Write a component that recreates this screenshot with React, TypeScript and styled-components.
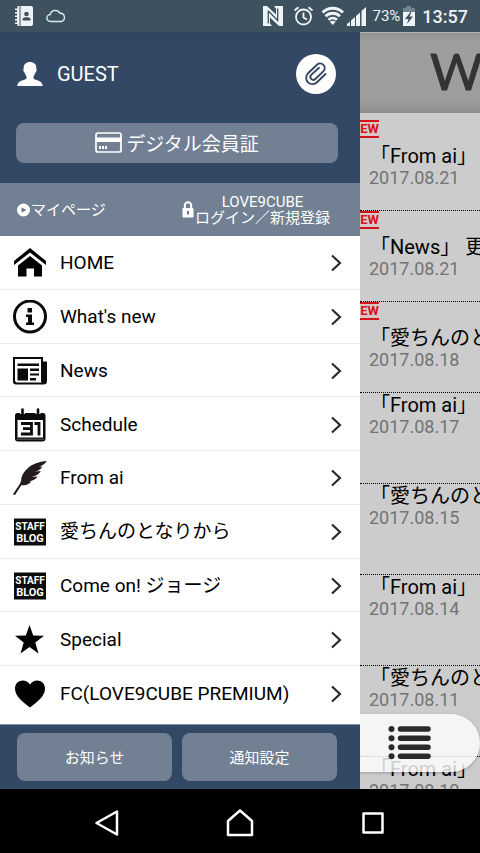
import React from "react";
import styled, { createGlobalStyle } from "styled-components";

const GlobalStyle = createGlobalStyle`
  * { box-sizing: border-box; }
  html, body { margin: 0; background: #000; }
  body, button { font-family: Roboto, "Noto Sans CJK JP", sans-serif; }
  button { border: 0; margin: 0; padding: 0; color: inherit; cursor: pointer; }
  a { color: inherit; text-decoration: none; }
  svg { display: block; flex: none; }
`;

const Screen = styled.div`
  display: flex;
  flex-direction: column;
  height: 100vh;
  overflow: hidden;
`;

const StatusBar = styled.header`
  flex: none;
  display: flex;
  align-items: center;
  justify-content: space-between;
  height: 32px;
  padding: 0 12px 0 15px;
  background: #3e515f;
  color: #eef3f7;
`;

const StatusGroup = styled.div<{ $gap: number }>`
  display: flex;
  align-items: center;
  gap: ${(p) => p.$gap}px;
`;

const BatteryText = styled.span`
  font-size: 15px;
`;

const Clock = styled.time`
  font-size: 18px;
  font-weight: 500;
`;

const Body = styled.div`
  flex: 1;
  min-height: 0;
  display: grid;
  grid-template-columns: 3fr 1fr;
  grid-template-rows: minmax(0, 1fr);
`;

const Drawer = styled.aside`
  display: flex;
  flex-direction: column;
  min-width: 0;
  background: #334865;
`;

const DrawerHead = styled.div`
  flex: none;
  display: flex;
  flex-direction: column;
  gap: 29px;
  padding: 22px 22px 20px 16px;
  background: linear-gradient(#2f4260, #334865 16px);
`;

const UserRow = styled.div`
  display: flex;
  align-items: center;
  height: 40px;
  padding: 0 2px 0 0;
  color: #fff;
`;

const UserName = styled.span`
  flex: 1;
  padding-left: 13px;
  font-size: 20px;
  line-height: 24px;
`;

const RoundButton = styled.button`
  display: grid;
  place-items: center;
  width: 40px;
  height: 40px;
  border-radius: 50%;
  background: #fff;
`;

const SlateButton = styled.button<{ $height: number; $size: number }>`
  flex: 1 1 auto;
  display: flex;
  align-items: center;
  justify-content: center;
  gap: 4px;
  height: ${(p) => p.$height}px;
  padding-bottom: 2px;
  border-radius: 8px;
  background: #718093;
  color: #fff;
  font-size: ${(p) => p.$size}px;
`;

const AccountBar = styled.div`
  flex: none;
  display: grid;
  grid-template-columns: 1fr 1fr;
  height: 53px;
  background: #718092;
  color: #fff;
  font-size: 15px;
  line-height: 16px;
`;

const AccountLink = styled.a<{ $start: number }>`
  display: flex;
  align-items: center;
  padding-left: ${(p) => p.$start}px;
  gap: 1px;
  white-space: nowrap;
  text-align: center;
`;

const Menu = styled.nav`
  flex: 1;
  min-height: 0;
  display: grid;
  grid-auto-rows: 1fr;
  padding-bottom: 4px;
  background: #fff;
`;

const MenuItem = styled.a`
  display: flex;
  align-items: center;
  padding: 2px 17px 0 13px;
  border-bottom: 1px solid #ececec;
  color: #000;
  font-size: 19px;
  line-height: 24px;
  white-space: nowrap;
  &:last-child { border-bottom-color: transparent; }
`;

const MenuLabel = styled.span`
  flex: 1;
  padding-left: 13px;
`;

const DrawerFoot = styled.div`
  flex: none;
  display: grid;
  grid-template-columns: 1fr 1fr;
  gap: 10px;
  padding: 8px 23px 8px 17px;
  border-top: 1px solid #8190a3;
`;

const Content = styled.main`
  position: relative;
  min-width: 0;
  overflow: hidden;
  background: #ccc;
`;

const Banner = styled.div`
  height: 81px;
  padding-left: 70px;
  overflow: hidden;
  border-top: 1px solid #b4b4b4;
  background: linear-gradient(#8f8f8f, #9e9e9e 8px, #9d9d9d 68px, #8c8c8c);
  color: #333;
  font-family: Lato, sans-serif;
  font-size: 51px;
  line-height: 76px;
  white-space: nowrap;
  -webkit-text-stroke: 1px #333;
`;

const Feed = styled.div`
  padding-top: 7px;
`;

const FeedItem = styled.a`
  display: block;
  height: 91px;
  overflow: hidden;
  border-bottom: 1px dotted #000;
  white-space: nowrap;
`;

const NewBadge = styled.span`
  display: flex;
  justify-content: flex-end;
  align-items: center;
  width: 19px;
  height: 18px;
  margin-bottom: 6px;
  overflow: hidden;
  border: solid #d3141d;
  border-width: 2px 0;
  background: #d8c6c6;
  color: #d3141d;
  font-size: 13px;
  font-weight: 700;
  line-height: 14px;
`;

const FeedTitle = styled.div`
  padding-left: 10px;
  color: #000;
  font-size: 20px;
  line-height: 24px;
`;

const FeedDate = styled.time`
  display: block;
  padding-left: 9px;
  color: #737373;
  font-size: 18px;
  line-height: 20px;
`;

const ListButton = styled.button`
  position: absolute;
  left: 0;
  right: 0;
  bottom: 17px;
  display: flex;
  align-items: center;
  height: 58px;
  padding-left: 28px;
  border-radius: 0 29px 29px 0;
  background: rgba(255, 255, 255, 0.8);
  box-shadow: 0 1px 3px rgba(0, 0, 0, 0.25);
`;

const NavBar = styled.footer`
  flex: none;
  display: flex;
  justify-content: center;
  align-items: center;
  gap: 93px;
  height: 64px;
  padding-top: 4px;
  background: #000;
`;

const NavButton = styled.button`
  display: grid;
  place-items: center;
  width: 40px;
  height: 48px;
  background: transparent;
`;

const BookIcon = () => (
  <svg width="18" height="20" viewBox="0 0 18 20">
    <path d="M2.500 0H4.500V20H2.500V18H0V16.500H2V14.500H0V13H2V11H0V9.500H2V7.500H0V6H2V4H0V2.500H2.500Z" fill="#eef3f7" />
    <path d="M5.500 0H16a2 2 0 0 1 2 2V18a2 2 0 0 1-2 2H5.500Z" fill="#eef3f7" />
    <circle cx="11.500" cy="8" r="2.300" fill="#3e515f" />
    <path d="M7.500 14.500v-1.500c0-2.500 8-2.500 8 0v1.500Z" fill="#3e515f" />
  </svg>
);

const CloudIcon = () => (
  <svg width="20" height="14" viewBox="0 0 20 14" fill="none" stroke="#dfe7ed" strokeWidth="1.400">
    <path d="M4.500 12.500a3.500 3.500 0 0 1-.3-7A5.300 5.300 0 0 1 14 4.300a4.200 4.200 0 0 1 1.500 8.200Z" />
  </svg>
);

const NfcIcon = () => (
  <svg width="24" height="20" viewBox="0 0 24 20" fill="#eef3f7">
    <path d="M0 0H4L13 8.500V2.500L11 0H20V20H16L7 11.500V17.500L9 20H0Z" />
    <path d="M5.300 4.500V17.500M14.700 2.500V15.500M5.300 5L14.700 14.500" fill="none" stroke="#3e515f" strokeWidth="1.300" />
  </svg>
);

const AlarmIcon = () => (
  <svg width="28" height="20" viewBox="0 0 28 20" fill="none" stroke="#eef3f7" strokeWidth="1.800">
    <circle cx="14.500" cy="11" r="7.500" />
    <path d="M14.500 6.500V11.500L18 13.500M5.500 4.500L9.500 1.200M23.500 4.500L19.500 1.200" />
  </svg>
);

const WifiIcon = () => (
  <svg width="26" height="20" viewBox="0 0 26 20" fill="none" stroke="#eef3f7" strokeWidth="2.800">
    <path d="M3.500 6.500C9 .8 18.500 .8 24 6.500" />
    <path d="M6.500 10.300C10.500 6.200 17 6.200 21 10.300" />
    <path d="M9.500 13.800C12 11.500 15.500 11.500 18 13.800" />
    <path d="M10.800 15.800Q13.750 13.800 16.700 15.800L13.750 19Z" fill="#eef3f7" stroke="none" />
  </svg>
);

const SignalIcon = () => (
  <svg width="23" height="20" viewBox="0 0 23 20" fill="#eef3f7">
    <path d="M0 20V18L3 15.500V20ZM4 20V14.500L8 11V20ZM9 20V10L13 6.500V20ZM14.500 20V5L19 1V20Z" />
  </svg>
);

const BatteryIcon = () => (
  <svg width="18" height="20" viewBox="0 0 18 20">
    <path d="M1 2H4V0H9V2H13V6H1Z" fill="#74828d" />
    <path d="M1 6H13V20H1Z" fill="#eef3f7" />
    <path d="M8.500 6L3 13H6.500L5 18L11 10.500H7.500L9.500 6Z" fill="#3e515f" />
  </svg>
);

const UserIcon = () => (
  <svg width="28" height="26" viewBox="0 0 28 26" fill="#fff">
    <path d="M14 1c-4 0-6.500 2.500-6.300 6 0 1-.6 1.500-.2 3 .3 1.300 1.100 1.300 1.500 2.500.5 1.400 1.500 2.500 1.500 3.500v1.500C8.500 19.500 2 19 1.200 25H26.800C26 19 19.500 19.500 17.500 17.500V16c0-1 1-2.100 1.500-3.500.4-1.200 1.200-1.200 1.500-2.500.4-1.500-.2-2-.2-3C20.500 3.500 18 1 14 1Z" />
  </svg>
);

const ClipIcon = () => (
  <svg width="24" height="26" viewBox="0 0 24 26" fill="none" stroke="#334865" strokeWidth="1.900" strokeLinecap="round">
    <path d="M21.500 13L13 21.300a6.300 6.300 0 0 1-9-9L13 3.700a4.600 4.600 0 0 1 6.500 6.500L11.300 18a2.900 2.900 0 0 1-4.100-4.100L15 6.800" />
  </svg>
);

const CardIcon = () => (
  <svg width="27" height="21" viewBox="0 0 27 21">
    <rect x="1" y="1" width="25" height="19" rx="2" fill="none" stroke="#fff" strokeWidth="1.700" />
    <path d="M1 5.500H26V10H1ZM4 14H6V17H4ZM7 14H9V17H7ZM10 14H12V17H10Z" fill="#fff" />
  </svg>
);

const PlayIcon = () => (
  <svg width="13" height="14" viewBox="0 0 13 14">
    <circle cx="6.500" cy="7" r="6.500" fill="#fff" />
    <path d="M4.500 4.500L9.500 7L4.500 9.500Z" fill="#66758a" />
  </svg>
);

const LockIcon = () => (
  <svg width="12" height="17" viewBox="0 0 12 17">
    <path d="M2.800 8V4.500a3.200 3.200 0 0 1 6.400 0V8" fill="none" stroke="#fff" strokeWidth="2" />
    <rect x="0.500" y="7" width="11" height="9.500" rx="1" fill="#fff" />
    <path d="M5 10H7V13.500H5Z" fill="#66758a" />
  </svg>
);

const ChevronIcon = () => (
  <svg width="14" height="18" viewBox="0 0 14 18" fill="none" stroke="#2b2b2b" strokeWidth="2.200">
    <path d="M3 1.500L11 9L3 16.500" />
  </svg>
);

const HomeIcon = () => (
  <svg width="34" height="34" viewBox="0 0 34 34" fill="#000">
    <path d="M17 2L33 15V19L17 6.500L1 19V15Z" />
    <path d="M17 10L29 19.500V30.500H21V22.500H13.500V30.500H5V19.500Z" />
  </svg>
);

const InfoIcon = () => (
  <svg width="34" height="34" viewBox="0 0 34 34">
    <circle cx="17" cy="16.500" r="15.500" fill="none" stroke="#0b0b0b" strokeWidth="3" />
    <path d="M14.500 8H19V12.500H14.500ZM13 14.500H19V22.500H21V25H13V22.500H15V17H13Z" fill="#0b0b0b" />
  </svg>
);

const NewsIcon = () => (
  <svg width="34" height="34" viewBox="0 0 34 34">
    <path d="M0 3H30V7.500H34V27a3.500 3.500 0 0 1-3.500 3.500H3A3 3 0 0 1 0 27.500Z" fill="#0b0b0b" />
    <path d="M2 5H28V27.500L28.500 28.500H3.500L2 27Z" fill="#fff" />
    <path d="M4.500 9.500H26V12H4.500ZM4.500 14.500H15V26.500H4.500ZM17 14.500H26V17H17ZM17 19.500H26V21.500H17ZM17 24H23V26.500H17Z" fill="#0b0b0b" />
  </svg>
);

const CalendarIcon = () => (
  <svg width="34" height="34" viewBox="0 0 34 34">
    <path d="M4 5H30a2.500 2.500 0 0 1 2.500 2.500V30.500a3 3 0 0 1-3 3H5a3 3 0 0 1-3-3V7.500A2.500 2.500 0 0 1 4 5Z" fill="#0b0b0b" />
    <path d="M4.500 12H30V29.500H4.500Z" fill="#fff" />
    <path d="M3.500 31.200H31" stroke="#888" strokeWidth="0.700" />
    <path d="M9.500 1.500V6M25 1.500V6" stroke="#fff" strokeWidth="5" />
    <path d="M9.500 1.500V7M25 1.500V7" stroke="#0b0b0b" strokeWidth="2.600" strokeLinecap="round" />
    <path d="M8 15.500H18.500V26H8M10 20.700H18.500M21.500 15.500H26V27.500" fill="none" stroke="#0b0b0b" strokeWidth="2.800" />
  </svg>
);

const FeatherIcon = () => (
  <svg width="34" height="34" viewBox="0 0 34 34" fill="#231a1c">
    <path d="M33.700 0C26 .5 19.500 3 15 7C10.500 11 8 15.500 8 20C7 24 3 28 0 33.500L2 34L8.500 24C12 25 16 23.500 18.500 20.500L13.500 20.500C18 20.500 22.500 19 24.500 15.500L18.500 16C23 15 26.500 13 27.800 10L22 10.500C26 9.500 28.500 8 29 5.500L26 5.500C29.500 4.500 32 3 33.700 0Z" />
  </svg>
);

const StaffIcon = () => (
  <svg width="34" height="34" viewBox="0 0 34 34">
    <rect x="1" y="3.500" width="32" height="27" fill="#0b0b0b" />
    <g fill="#fff" fontFamily="Roboto, sans-serif" fontWeight="700" textAnchor="middle">
      <text x="17" y="15" fontSize="10">STAFF</text>
      <text x="17" y="27" fontSize="11">BLOG</text>
    </g>
  </svg>
);

const StarIcon = () => (
  <svg width="34" height="34" viewBox="0 0 34 34" fill="#000">
    <path d="M16.500 2L20.200 12.500L31 12.700L22.300 19.500L25.500 30.500L16.500 24L7.500 30.500L10.700 19.500L2 12.700L12.800 12.500Z" />
  </svg>
);

const HeartIcon = () => (
  <svg width="34" height="34" viewBox="0 0 34 34" fill="#000">
    <path d="M17 30.500C9 24.500 2 19 2 11.500C2 3 12.500 .5 17 7.500C21.500 .5 32 3 32 11.500C32 19 25 24.500 17 30.500Z" />
  </svg>
);

const ListIcon = () => (
  <svg width="44" height="36" viewBox="0 0 44 36" stroke="#2a2a2a" strokeLinecap="round" fill="#2a2a2a">
    <path d="M12.500 4H40M12.500 13.300H40M12.500 22.300H40M12.500 31.300H40" strokeWidth="5.500" />
    <g stroke="none">
      <circle cx="3.500" cy="4" r="3" />
      <circle cx="3.500" cy="13.300" r="3" />
      <circle cx="3.500" cy="22.300" r="3" />
      <circle cx="3.500" cy="31.300" r="3" />
    </g>
  </svg>
);

const menu = [
  { label: "HOME", Icon: HomeIcon },
  { label: "What's new", Icon: InfoIcon },
  { label: "News", Icon: NewsIcon },
  { label: "Schedule", Icon: CalendarIcon },
  { label: "From ai", Icon: FeatherIcon },
  { label: "愛ちんのとなりから", Icon: StaffIcon },
  { label: "Come on! ジョージ", Icon: StaffIcon },
  { label: "Special", Icon: StarIcon },
  { label: "FC(LOVE9CUBE PREMIUM)", Icon: HeartIcon },
];

const feed = [
  { title: "「From ai」", date: "2017.08.21", isNew: true },
  { title: "「News」 更", date: "2017.08.21", isNew: true },
  { title: "「愛ちんのと", date: "2017.08.18", isNew: true },
  { title: "「From ai」", date: "2017.08.17", isNew: false },
  { title: "「愛ちんのと", date: "2017.08.15", isNew: false },
  { title: "「From ai」", date: "2017.08.14", isNew: false },
  { title: "「愛ちんのと", date: "2017.08.11", isNew: false },
  { title: "「From ai」", date: "2017.08.10", isNew: false },
];

export default function App() {
  return (
    <Screen>
      <GlobalStyle />
      <StatusBar>
        <StatusGroup $gap={13}>
          <BookIcon />
          <CloudIcon />
        </StatusGroup>
        <StatusGroup $gap={2}>
          <NfcIcon />
          <AlarmIcon />
          <WifiIcon />
          <SignalIcon />
          <BatteryText>73%</BatteryText>
          <BatteryIcon />
          <Clock>13:57</Clock>
        </StatusGroup>
      </StatusBar>

      <Body>
        <Drawer>
          <DrawerHead>
            <UserRow>
              <UserIcon />
              <UserName>GUEST</UserName>
              <RoundButton type="button" aria-label="Attachments">
                <ClipIcon />
              </RoundButton>
            </UserRow>
            <SlateButton type="button" $height={40} $size={19}>
              <CardIcon />
              デジタル会員証
            </SlateButton>
          </DrawerHead>
          <AccountBar>
            <AccountLink href="#mypage" $start={17}>
              <PlayIcon />
              マイページ
            </AccountLink>
            <AccountLink href="#login" $start={2}>
              <LockIcon />
              <span>
                LOVE9CUBE
                <br />
                ログイン／新規登録
              </span>
            </AccountLink>
          </AccountBar>
          <Menu>
            {menu.map(({ label, Icon }) => (
              <MenuItem key={label} href="#menu">
                <Icon />
                <MenuLabel>{label}</MenuLabel>
                <ChevronIcon />
              </MenuItem>
            ))}
          </Menu>
          <DrawerFoot>
            <SlateButton type="button" $height={48} $size={15}>お知らせ</SlateButton>
            <SlateButton type="button" $height={48} $size={15}>通知設定</SlateButton>
          </DrawerFoot>
        </Drawer>

        <Content>
          <Banner>W</Banner>
          <Feed>
            {feed.map((item) => (
              <FeedItem key={item.date + item.title} href="#article">
                {item.isNew && <NewBadge>NEW</NewBadge>}
                <FeedTitle>{item.title}</FeedTitle>
                <FeedDate>{item.date}</FeedDate>
              </FeedItem>
            ))}
          </Feed>
          <ListButton type="button" aria-label="Menu">
            <ListIcon />
          </ListButton>
        </Content>
      </Body>

      <NavBar>
        <NavButton type="button" aria-label="Back">
          <svg width="26" height="28" viewBox="0 0 26 28" fill="none" stroke="#fff" strokeWidth="2.500" strokeLinejoin="round">
            <path d="M2.500 14L23 2.500V25.500Z" />
          </svg>
        </NavButton>
        <NavButton type="button" aria-label="Home">
          <svg width="28" height="28" viewBox="0 0 28 28" fill="none" stroke="#fff" strokeWidth="2.500" strokeLinejoin="round">
            <path d="M14 1.500L26 12V26H2V12Z" />
          </svg>
        </NavButton>
        <NavButton type="button" aria-label="Recent apps">
          <svg width="22" height="22" viewBox="0 0 22 22" fill="none" stroke="#fff" strokeWidth="2.500" strokeLinejoin="round">
            <path d="M1.500 1.500H20.500V20.500H1.500Z" />
          </svg>
        </NavButton>
      </NavBar>
    </Screen>
  );
}
